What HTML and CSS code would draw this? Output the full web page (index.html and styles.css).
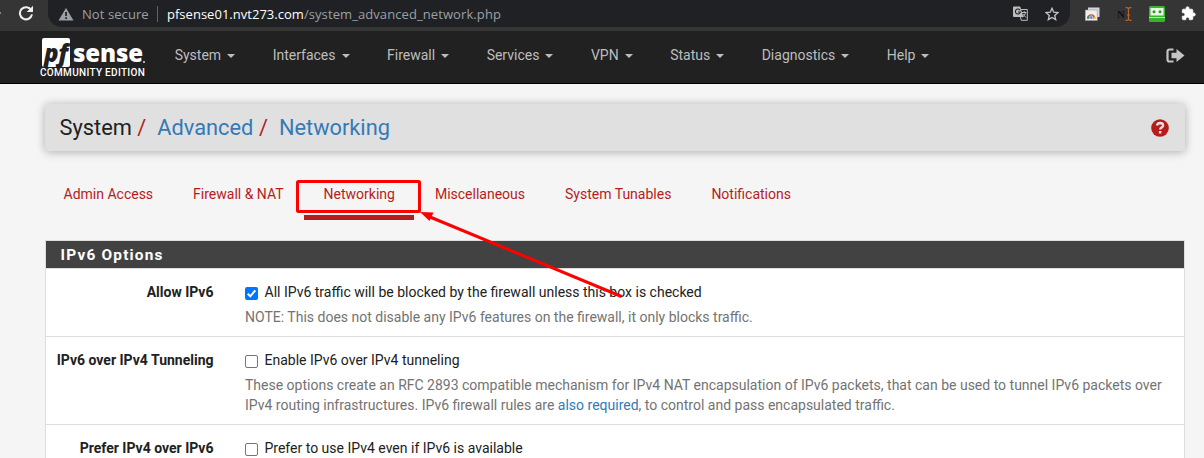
FILE: index.html
```html
<!DOCTYPE html>
<html lang="en">
<head>
<meta charset="utf-8">
<title>pfSense - System: Advanced: Networking</title>
<link rel="stylesheet" href="styles.css">
</head>
<body>
<div class="browser">
  <span class="forward-edge"></span>
  <svg class="reload" width="16" height="16" viewBox="0 0 16 16"><path d="M13.3 5.2A6.1 6.1 0 1 0 14 9.4" fill="none" stroke="#f1f1f1" stroke-width="2"/><path d="M15 .8v6.3H8.7z" fill="#f1f1f1"/></svg>
  <div class="address">
    <svg class="warning" width="16" height="14" viewBox="0 0 16 14"><path d="M8 1l7.500 12.500H.5z" fill="#9aa0a6"/><path d="M7.200 5h1.700v4H7.200zM7.200 10.300h1.700V12H7.200z" fill="#202124"/></svg>
    <span class="insecure">Not secure</span>
    <span class="divider"></span>
    <span class="url"><b>pfsense01.nvt273.com</b>/system_advanced_network.php</span>
    <svg class="translate" width="15" height="15" viewBox="0 0 15 15"><path d="M6 3.5h8.3v10.8H8.2z" fill="none" stroke="#bdbdbd"/><path d="M1 .5h6.2l3.2 10.6H1A1 1 0 0 1 0 10V1.500Q0 .5 1 .5z" fill="#bdbdbd"/><path d="M7 4.100A2.500 2.500 0 1 0 7.400 6H5" fill="none" stroke="#202124" stroke-width="1.100"/><path d="M9 6.500h4.500M11.200 5v1.500M12.600 6.500q-.6 3-3 4.500M9.800 8l3.200 3.500" fill="none" stroke="#bdbdbd"/></svg>
    <svg class="star" width="14" height="14" viewBox="0 0 14 14"><path d="M7 1.300l1.700 3.900 4.200.4-3.200 2.800 1 4.200L7 10.400l-3.700 2.200 1-4.200L1.100 5.600l4.200-.4z" fill="none" stroke="#c4c4c4" stroke-width="1.300"/></svg>
  </div>
  <div class="extensions">
    <svg width="15" height="14" viewBox="0 0 15 14"><path d="M3 .5h11.500v9.500H3z" fill="#d6d6d6"/><path d="M.3 3h12v10.500H.3z" fill="#eee" stroke="#999" stroke-width=".6"/><path d="M2 11.500a4.200 4.200 0 0 1 8.400 0z" fill="#db4437"/><path d="M2 11.500a4 4 0 0 1 1-2.700l2 2.700z" fill="#0f9d58"/><path d="M8 11.500l1.400-2.500a4 4 0 0 1 1 2.500z" fill="#f4b400"/><circle cx="6.200" cy="10.500" r="1.700" fill="#4285f4" stroke="#fff" stroke-width=".6"/></svg>
    <svg width="15" height="14" viewBox="0 0 15 14"><text class="ext-n" x="0" y="11">N</text><path d="M8.500.7h1.800l1.200.8 1.200-.8h1.800M8.500 13.300h1.800l1.200-.8 1.200.8h1.800M11.500 1.500v11M10 8h3" fill="none" stroke="#bd6127" stroke-width="1.200"/></svg>
    <svg width="16" height="16" viewBox="0 0 16 16"><rect width="16" height="16" rx="1.500" fill="#36b52a"/><path d="M1.500 2h13v7.500h-13z" fill="#e8f8e4"/><path d="M0 11.500h16" stroke="#b9eeb2"/><circle cx="5" cy="5.800" r="1.500" fill="#2a9c22"/><circle cx="11" cy="5.800" r="1.500" fill="#2a9c22"/></svg>
    <svg width="15" height="15" viewBox="0 0 24 24"><path d="M20.500 11H19V7a2 2 0 0 0-2-2h-4V3.500a2.500 2.500 0 0 0-5 0V5H4a2 2 0 0 0-2 2v3.800h1.500a2.700 2.700 0 0 1 0 5.400H2V20a2 2 0 0 0 2 2h3.800v-1.500a2.700 2.700 0 0 1 5.400 0V22H17a2 2 0 0 0 2-2v-4h1.500a2.500 2.500 0 0 0 0-5z" fill="#fff" stroke="#fff"/></svg>
  </div>
</div>
<nav class="navbar">
  <div class="brand">
    <div class="logo"><span class="pf">pf</span><span class="sense">sense</span><span class="dot"></span></div>
    <div class="edition">COMMUNITY EDITION</div>
  </div>
  <ul class="menu">
    <li>System<i></i></li><li>Interfaces<i></i></li><li>Firewall<i></i></li><li>Services<i></i></li><li>VPN<i></i></li><li>Status<i></i></li><li>Diagnostics<i></i></li><li>Help<i></i></li>
  </ul>
  <svg class="logout" width="19" height="15" viewBox="0 0 19 15"><path d="M7.500 1.500h-4a2 2 0 0 0-2 2v8a2 2 0 0 0 2 2h4" fill="none" stroke="#c4c4c4" stroke-width="2.200"/><path d="M5.500 4.800h5V1l8 6.500-8 6.500v-3.800h-5z" fill="#c4c4c4"/></svg>
</nav>
<main class="container">
  <header class="crumbs">
    <div class="trail"><span>System</span><em>/</em><a>Advanced</a><em>/</em><a>Networking</a></div>
    <svg class="help" width="18" height="18" viewBox="0 0 18 18"><circle cx="9" cy="9" r="8.800" fill="#b71c1c"/><path d="M5.900 6.500Q6.500 4 9.200 4q2.900.1 2.900 2.500 0 1.300-1.600 2.100-1.300.7-1.300 1.800" fill="none" stroke="#e5e5e5" stroke-width="2.300"/><path d="M7.900 12h2.500v2.500H7.900z" fill="#e5e5e5"/></svg>
  </header>
  <ul class="tabs">
    <li>Admin Access</li><li>Firewall &amp; NAT</li><li class="active">Networking</li><li>Miscellaneous</li><li>System Tunables</li><li>Notifications</li>
  </ul>
  <section class="panel">
    <h2>IPv6 Options</h2>
    <div class="row">
      <div class="label">Allow IPv6</div>
      <div class="field"><label><span class="box checked"><svg width="13" height="13" viewBox="0 0 13 13"><path d="M2.700 6.700l2.600 2.600 5-6" fill="none" stroke="#fff" stroke-width="2"/></svg></span><span>All IPv6 traffic will be blocked by the firewall unless this box is checked</span></label>
      <p>NOTE: This does not disable any IPv6 features on the firewall, it only blocks traffic.</p></div>
    </div>
    <div class="row">
      <div class="label">IPv6 over IPv4 Tunneling</div>
      <div class="field"><label><span class="box"></span><span>Enable IPv6 over IPv4 tunneling</span></label>
      <p>These options create an RFC 2893 compatible mechanism for IPv4 NAT encapsulation of IPv6 packets, that can be used to tunnel IPv6 packets over<br>IPv4 routing infrastructures. IPv6 firewall rules are <a>also required</a>, to control and pass encapsulated traffic.</p></div>
    </div>
    <div class="row">
      <div class="label">Prefer IPv4 over IPv6</div>
      <div class="field"><label><span class="box"></span><span>Prefer to use IPv4 even if IPv6 is available</span></label></div>
    </div>
  </section>
</main>
<svg class="annotation" width="1204" height="458" viewBox="0 0 1204 458"><rect x="297.500" y="181.500" width="122" height="30" rx="1" fill="none" stroke="#f00" stroke-width="3"/><path d="M430 217L621.500 296.500" stroke="#f00" stroke-width="3"/><path d="M420 212l13.500.5-4 8.500z" fill="#f00"/></svg>
</body>
</html>
```
FILE: styles.css
```css
* { box-sizing: border-box; }
body { margin: 0; height: 458px; overflow: hidden; background: #f5f5f5; color: #212121; font: 14px/20px Roboto, sans-serif; position: relative; }
ul { list-style: none; margin: 0; padding: 0; }
svg { display: block; flex: none; }
a { color: #337ab7; }
.browser { height: 31px; background: #353535; display: flex; align-items: flex-start; }
.forward-edge { width: 1px; height: 2px; margin-top: 12px; background: #888; }
.reload { margin: 5px 0 0 17px; }
.address { margin-left: 14px; width: 1022px; height: 27px; background: #202124; border-radius: 0 0 14px 14px; display: flex; align-items: center; padding-left: 10px; font: 13px/18px "Open Sans", sans-serif; color: #9aa0a6; white-space: nowrap; }
.insecure { margin-left: 8px; width: 67px; letter-spacing: .08px; }
.divider { width: 1px; height: 16px; margin: 0 9px 0 8px; background: #5f6368; }
.url { letter-spacing: .09px; }
.url b { color: #fff; font-weight: 400; letter-spacing: .02px; }
.translate { margin-left: auto; }
.star { margin: 0 11px 0 17px; }
.extensions { display: flex; align-items: center; gap: 17px; height: 27px; margin-left: 15px; }
.extensions svg:last-child { margin-left: -1px; }
.ext-n { font: bold 11px "Liberation Serif", serif; fill: #111; }
.navbar { height: 53px; background: #212121; border-bottom: 1px solid #000; display: flex; align-items: flex-start; }
.brand { width: 135px; padding: 7px 0 0 40px; flex: none; }
.logo { display: flex; width: 105px; height: 29px; margin-left: 2px; color: #fff; font: 800 24px/29px "Open Sans", sans-serif; letter-spacing: -.1px; }
.pf { flex: none; width: 28px; height: 29px; background: #fff; color: #212121; font-style: italic; border-radius: 2px; text-align: center; }
.sense { margin-left: 3px; }
.dot { flex: none; width: 2px; height: 2px; background: #aaa; align-self: flex-end; margin-bottom: 4px; }
.edition { color: #fff; font: 500 10px/12px Roboto, sans-serif; white-space: nowrap; letter-spacing: .31px; }
.menu { display: flex; margin: 14px 0 0 39.7px; gap: 37.5px; color: #bdbdbd; white-space: nowrap; }
.menu i { display: inline-block; margin-left: 6px; border: 4px solid transparent; border-top-color: #bdbdbd; border-bottom: 0; vertical-align: middle; }
.logout { margin: 17px 19px 0 auto; }
.container { width: 1140px; margin: 20px 0 0 45px; }
.crumbs { height: 47px; background: #e0e0e0; border-radius: 4px; box-shadow: 0 1px 10px rgba(0,0,0,.3); display: flex; align-items: center; justify-content: space-between; padding: 0 16px 0 14.5px; }
.trail { font-size: 21.8px; line-height: 30px; white-space: nowrap; }
.trail em { color: #b71c1c; font-style: normal; margin: 0 11px 0 5.5px; }
.tabs { display: flex; gap: 40px; height: 69px; margin: 20px 0 0 18.5px; color: #b71c1c; align-items: flex-start; white-space: nowrap; padding-top: 13px; }
.active { height: 36px; border-bottom: 5px solid #b71c1c; padding: 0 19.5px; margin: 0 -19.5px; }
.panel { background: #fff; border: 1px solid #ddd; height: 240px; }
h2 { height: 28px; margin: 0; padding-left: 14.5px; background: #424242; border-bottom: 1px solid #ddd; color: #fff; font: 700 15.4px/28px Roboto, sans-serif; letter-spacing: 1.2px; }
.row { display: flex; border-bottom: 1px solid #ddd; padding: 13px 0 9px; white-space: nowrap; }
.label { width: 167.5px; margin-right: 31.5px; text-align: right; font-weight: 700; }
.field label { display: flex; height: 20px; gap: 6.5px; }
.box { width: 13px; height: 13px; margin-top: 5px; border: 1px solid #767676; border-radius: 2px; background: #fff; }
.checked { background: #0075ff; border: 0; }
.field p { margin: 5px 0 0; color: #737373; }
.annotation { position: absolute; left: 0; top: 0; }
```
